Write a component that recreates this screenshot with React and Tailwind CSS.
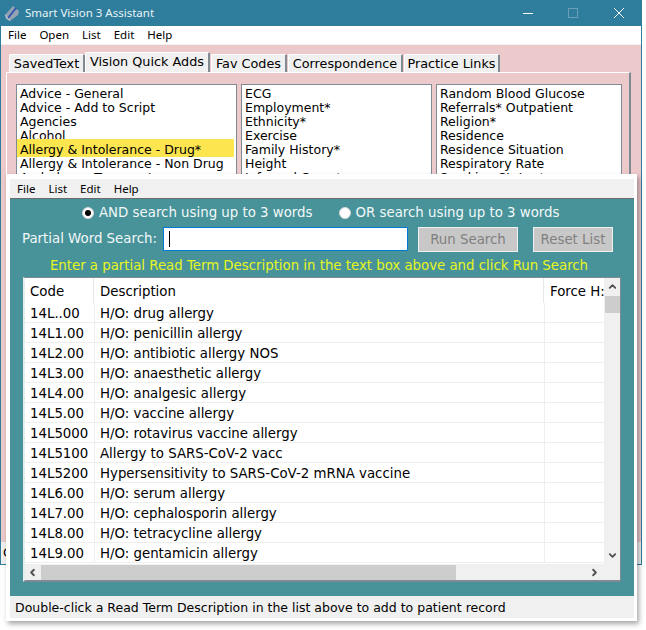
import React from "react";
import { ChevronUp, ChevronDown, ChevronLeft, ChevronRight } from "lucide-react";

const col1 = ["Advice - General", "Advice - Add to Script", "Agencies", "Alcohol", "Allergy & Intolerance - Drug*", "Allergy & Intolerance - Non Drug", "Ambulance Transport"];
const col2 = ["ECG", "Employment*", "Ethnicity*", "Exercise", "Family History*", "Height", "Informal Carer*"];
const col3 = ["Random Blood Glucose", "Referrals* Outpatient", "Religion*", "Residence", "Residence Situation", "Respiratory Rate", "Smoking Status*"];

const rows = [
  ["14L..00", "H/O: drug allergy"],
  ["14L1.00", "H/O: penicillin allergy"],
  ["14L2.00", "H/O: antibiotic allergy NOS"],
  ["14L3.00", "H/O: anaesthetic allergy"],
  ["14L4.00", "H/O: analgesic allergy"],
  ["14L5.00", "H/O: vaccine allergy"],
  ["14L5000", "H/O: rotavirus vaccine allergy"],
  ["14L5100", "Allergy to SARS-CoV-2 vacc"],
  ["14L5200", "Hypersensitivity to SARS-CoV-2 mRNA vaccine"],
  ["14L6.00", "H/O: serum allergy"],
  ["14L7.00", "H/O: cephalosporin allergy"],
  ["14L8.00", "H/O: tetracycline allergy"],
  ["14L9.00", "H/O: gentamicin allergy"],
];

function QuickList({ items, width, highlight }) {
  return (
    <div className={`h-[120px] shrink-0 overflow-hidden border border-[#7f8a92] bg-white pt-[1px] text-[12.5px] leading-[14px] ${width}`}>
      {items.map((item) =>
        item === highlight ? (
          <div key={item} className="relative mt-[-3px] mb-[-1px] mr-[2px] h-[18px] whitespace-nowrap bg-[#fde550] pl-[3px] pt-[4px]">
            {item}
          </div>
        ) : (
          <div key={item} className="h-[14px] whitespace-nowrap pl-[3px] pt-[1px]">
            {item}
          </div>
        )
      )}
    </div>
  );
}

function Radio({ checked, label }) {
  return (
    <div className="flex items-center gap-[5px]">
      <span className="flex h-[12px] w-[12px] items-center justify-center rounded-full border border-[#d8d8d8] bg-white">
        {checked && <span className="h-[6px] w-[6px] rounded-full bg-black" />}
      </span>
      <span>{label}</span>
    </div>
  );
}

function Tab({ width, label, selected }) {
  return (
    <div className={`flex items-center justify-center whitespace-nowrap rounded-t-[2px] border-t border-l border-r-2 border-white border-r-[#7f8a92] bg-[#f0f0f0] ${width} ${selected ? "h-[20px] pb-[2px]" : "h-[18px]"}`}>
      {label}
    </div>
  );
}

function MainWindow() {
  return (
    <div className="flex h-[565px] w-[642px] flex-col border-x border-b border-[#2e7d9c] bg-[#ecc9cb]">
      <div className="flex h-[26px] shrink-0 items-center bg-[#2e7d9c] text-[11.5px] text-[#e8f2f6]">
        <svg width="16" height="17" viewBox="0 0 16 17" className="ml-[3px] shrink-0">
          <path d="M1 10 L9 1 L15 6 L14 10 L6 16 L2 14 Z" fill="#93a3b3" />
          <path d="M4 13 L12 3" stroke="#2f55ad" strokeWidth="2" />
          <path d="M1 10 L6 16" stroke="#c3ccd6" strokeWidth="1" />
        </svg>
        <span className="ml-[5px] font-['Noto_Sans',sans-serif]">Smart Vision 3 Assistant</span>
        <div className="ml-auto flex items-center">
          <span className="mr-[35px] h-[1px] w-[10px] bg-white" />
          <span className="mr-[36px] h-[10px] w-[10px] border border-[#6a9fb6]" />
          <svg width="10" height="10" viewBox="0 0 10 10" className="mr-[17px]">
            <path d="M0 0 L10 10 M10 0 L0 10" stroke="#ffffff" strokeWidth="1" />
          </svg>
        </div>
      </div>
      <div className="flex h-[19px] shrink-0 items-center gap-[13px] border-b border-[#f0f0f0] bg-white pl-[7px] font-['Noto_Sans',sans-serif] text-[11.5px] text-black">
        <span>File</span>
        <span>Open</span>
        <span>List</span>
        <span>Edit</span>
        <span>Help</span>
      </div>
      <div className="mt-[7px] flex h-[20px] shrink-0 items-end pl-[8px] text-[12.8px] text-black">
        <Tab width="w-[76px]" label="SavedText" />
        <Tab width="w-[125px]" label="Vision Quick Adds" selected />
        <div className="ml-[1px]"><Tab width="w-[76px]" label="Fav Codes" /></div>
        <div className="ml-[1px]"><Tab width="w-[115px]" label="Correspondence" /></div>
        <div className="ml-[1px]"><Tab width="w-[96px]" label="Practice Links" /></div>
      </div>
      <div className="ml-[5px] flex min-h-0 w-[625px] flex-1 gap-[4px] border-t border-l border-r-2 border-white border-r-[#7f8a92] pl-[9px] pt-[11px] text-black">
        <QuickList items={col1} width="w-[221px]" highlight="Allergy & Intolerance - Drug*" />
        <QuickList items={col2} width="w-[191px]" />
        <QuickList items={col3} width="w-[186px]" />
      </div>
      <div className="flex h-[22px] shrink-0 items-center bg-[#f0f0f0] pl-[2px] text-[12.5px] text-black">C</div>
    </div>
  );
}

function ResultsTable() {
  return (
    <div className="relative h-[305px] w-[598px] overflow-hidden border-t border-r border-b-2 border-l-2 border-[#7f8a92] border-l-[#e4eeee] bg-white text-[13.33px] text-black">
      <div className="flex h-[25px] items-center">
        <div className="flex h-full w-[69px] shrink-0 items-center border-r border-[#e8e8e8] pl-[5px] pt-[2px]">Code</div>
        <div className="flex h-full w-[450px] shrink-0 items-center border-r border-[#e8e8e8] pl-[6px] pt-[2px]">Description</div>
        <div className="whitespace-nowrap pl-[6px] pt-[2px]">Force H:</div>
      </div>
      {rows.map(([code, desc]) => (
        <div key={code} className="flex h-[20px] items-center border-b border-[#eeeeee]">
          <div className="flex h-full w-[70px] shrink-0 items-center border-r border-[#eeeeee] pl-[5px] pt-[2px]">{code}</div>
          <div className="flex h-full w-[450px] shrink-0 items-center whitespace-nowrap border-r border-[#eeeeee] pl-[5px] pt-[2px]">{desc}</div>
        </div>
      ))}
      {/* scrollbars sit over the grid */}
      <div className="absolute right-0 top-0 flex h-[286px] w-[16px] flex-col items-center bg-[#f0f0f0]">
        <ChevronUp size={11} strokeWidth={4} className="mt-[3px] text-[#505050]" />
        <div className="mt-[4px] h-[17px] w-[15px] bg-[#cdcdcd]" />
        <ChevronDown size={11} strokeWidth={4} className="mb-[3px] mt-auto text-[#505050]" />
      </div>
      <div className="absolute bottom-0 left-0 flex h-[16px] w-full items-center bg-[#f0f0f0]">
        <ChevronLeft size={11} strokeWidth={4} className="ml-[2px] shrink-0 text-[#505050]" />
        <div className="ml-[3px] h-[15px] w-[415px] bg-[#cdcdcd]" />
        <ChevronRight size={11} strokeWidth={4} className="ml-auto mr-[20px] shrink-0 text-[#505050]" />
      </div>
    </div>
  );
}

function SearchDialog() {
  return (
    <div className="absolute left-[6px] top-[174px] flex h-[447px] w-[631px] flex-col border-t-[5px] border-r-[3px] border-b-[3px] border-l-[4px] border-white shadow-[2px_3px_5px_rgba(0,0,0,0.35)]">
      <div className="flex h-[20px] shrink-0 items-center gap-[13px] border-b border-[#6b6b6b] bg-[#f0f0f0] pl-[7px] font-['Noto_Sans',sans-serif] text-[11.5px] text-black">
        <span>File</span>
        <span>List</span>
        <span>Edit</span>
        <span>Help</span>
      </div>
      <div className="flex h-[397px] shrink-0 flex-col bg-[#48939a] px-[13px]">
        <div className="mt-[4px] flex h-[20px] items-center text-[13.33px] text-[#f2f8f8]">
          <div className="ml-[59px]"><Radio checked label="AND search using up to 3 words" /></div>
          <div className="ml-[26px]"><Radio label="OR search using up to 3 words" /></div>
        </div>
        <div className="mt-[4px] flex h-[25px] items-start text-[13.33px]">
          <span className="ml-[-1px] flex h-[24px] w-[141px] items-center whitespace-nowrap text-[#f2f8f8]">Partial Word Search:</span>
          <div className="flex h-[24px] w-[245px] items-center border border-[#0078d7] bg-white pl-[5px]">
            <span className="h-[16px] w-[1px] bg-black" />
          </div>
          <div className="ml-[10px] flex h-[25px] w-[100px] items-center justify-center border border-[#f0f0f0] bg-[#c8c8c8] text-[#808080]">Run Search</div>
          <div className="ml-[15px] flex h-[25px] w-[80px] items-center justify-center border border-[#f0f0f0] bg-[#c8c8c8] text-[#808080]">Reset List</div>
        </div>
        <div className="mt-[5px] h-[17px] whitespace-nowrap pr-[6px] text-center text-[13.3px] leading-[17px] text-[#e6f51e]">
          Enter a partial Read Term Description in the text box above and click Run Search
        </div>
        <div className="mt-[3px]"><ResultsTable /></div>
      </div>
      <div className="flex h-[22px] shrink-0 items-center bg-[#f0f0f0] pl-[5px] pt-[2px] text-[12.5px] text-black">
        Double-click a Read Term Description in the list above to add to patient record
      </div>
    </div>
  );
}

export default function App() {
  return (
    <div className="relative h-[630px] w-[646px] overflow-hidden bg-white font-['DejaVu_Sans',sans-serif]">
      <MainWindow />
      <SearchDialog />
    </div>
  );
}
